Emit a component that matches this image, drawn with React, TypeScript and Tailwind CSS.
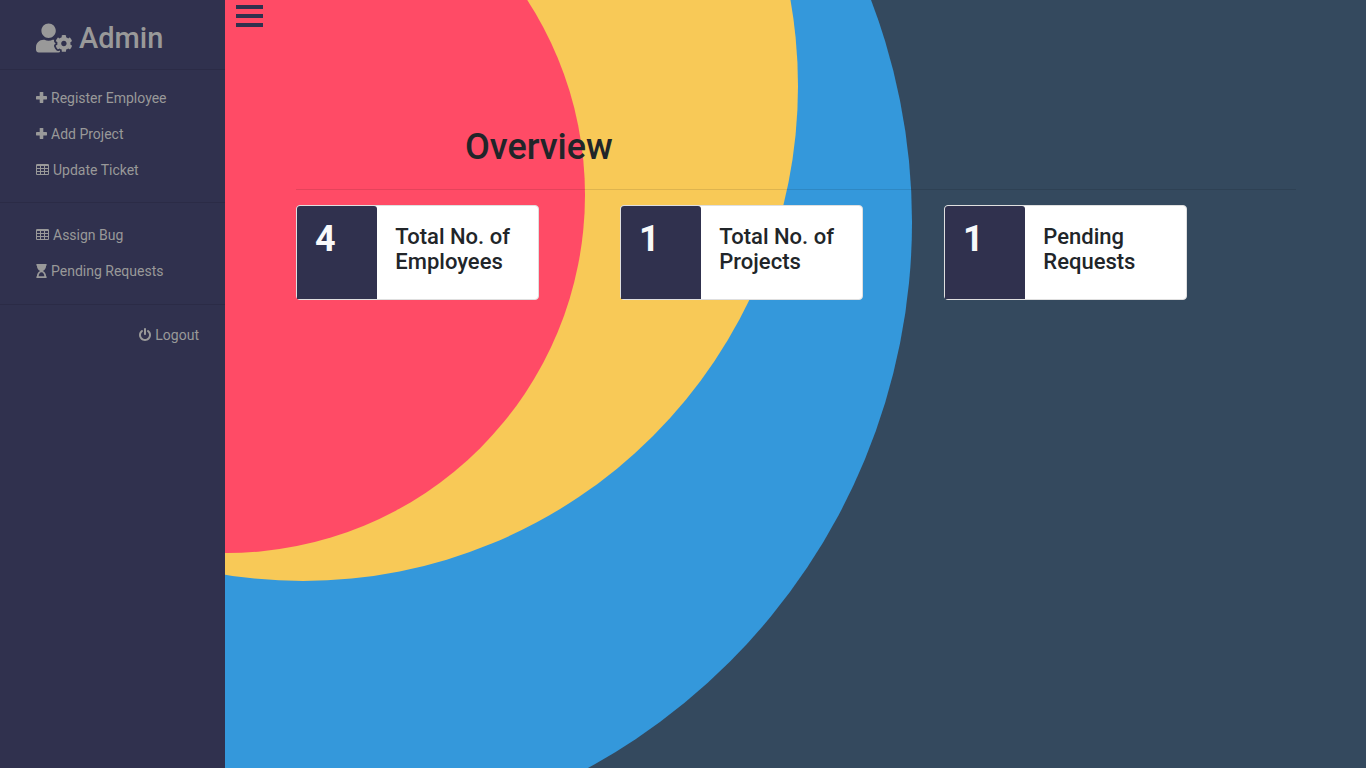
import { useState } from "react";
import type { ReactNode } from "react";
import { FaHourglassStart, FaUserCog } from "react-icons/fa";

function Glyph({ width, d }: { width: number; d: string }) {
  return (
    <svg
      aria-hidden="true"
      viewBox={`0 0 ${width} 1792`}
      className="h-[14px] w-auto shrink-0 fill-current"
    >
      <path d={d} />
    </svg>
  );
}

function PlusIcon() {
  return (
    <svg aria-hidden="true" viewBox="0 0 11 14" className="h-[14px] w-[11px] shrink-0 fill-current">
      <rect x="0" y="5" width="11" height="3.500" rx="0.400" />
      <rect x="3.700" y="1" width="3.600" height="11" rx="0.400" />
    </svg>
  );
}

const tablePath =
  "M512 1376v-192q0-14-9-23t-23-9H160q-14 0-23 9t-9 23v192q0 14 9 23t23 9h320q14 0 23-9t9-23zm0-384V800q0-14-9-23t-23-9H160q-14 0-23 9t-9 23v192q0 14 9 23t23 9h320q14 0 23-9t9-23zm512 384v-192q0-14-9-23t-23-9H672q-14 0-23 9t-9 23v192q0 14 9 23t23 9h320q14 0 23-9t9-23zM512 608V416q0-14-9-23t-23-9H160q-14 0-23 9t-9 23v192q0 14 9 23t23 9h320q14 0 23-9t9-23zm512 384V800q0-14-9-23t-23-9H672q-14 0-23 9t-9 23v192q0 14 9 23t23 9h320q14 0 23-9t9-23zm512 384v-192q0-14-9-23t-23-9h-320q-14 0-23 9t-9 23v192q0 14 9 23t23 9h320q14 0 23-9t9-23zm-512-768V416q0-14-9-23t-23-9H672q-14 0-23 9t-9 23v192q0 14 9 23t23 9h320q14 0 23-9t9-23zm512 384V800q0-14-9-23t-23-9h-320q-14 0-23 9t-9 23v192q0 14 9 23t23 9h320q14 0 23-9t9-23zm0-384V416q0-14-9-23t-23-9h-320q-14 0-23 9t-9 23v192q0 14 9 23t23 9h320q14 0 23-9t9-23zm128-320v1088q0 66-47 113t-113 47H160q-66 0-113-47T0 1376V288q0-66 47-113t113-47h1344q66 0 113 47t47 113z";
const powerPath =
  "M1536 896q0 156-61 298t-164 245-245 164-298 61-298-61-245-164-164-245T0 896q0-182 80.500-343T307 283q43-32 95.500-25t83.500 50q32 42 24.500 94.500T461 489q-98 74-151.500 181T256 896q0 104 40.500 198.500T406 1258t163.500 109.500T768 1408t198.500-40.500T1130 1258t109.500-163.500T1280 896q0-119-53.500-226T1075 489q-42-32-49.500-84.500T1050 310q31-43 84-50t95 25q146 109 226.500 270t80.500 341zM896 128v640q0 52-38 90t-90 38-90-38-38-90V128q0-52 38-90t90-38 90 38 38 90z";

function NavLink({ icon, children }: { icon: ReactNode; children: ReactNode }) {
  return (
    <a href="#" className="flex items-center gap-1 text-sm leading-5 hover:text-gray-100">
      {icon}
      {children}
    </a>
  );
}

function StatCard({ value, label }: { value: number; label: string }) {
  return (
    <article className="flex h-[95px] w-3/4 rounded border border-[#dfdfdf] bg-white">
      <div className="w-1/3 rounded-t-[3px] bg-[#30314e] px-[18px] pt-3 text-4xl leading-[43px] font-bold text-[#f8f9fa]">
        {value}
      </div>
      <h2 className="flex-1 px-[18px] pt-[18px] text-[22px] leading-[25px] font-medium text-[#212529]">
        {label}
      </h2>
    </article>
  );
}

function Backdrop() {
  return (
    <svg
      aria-hidden="true"
      viewBox="0 0 1366 768"
      preserveAspectRatio="xMinYMin slice"
      className="absolute inset-0 -z-10 h-full w-full"
    >
      <rect width="1366" height="768" fill="#34495e" />
      <circle cx="290" cy="222" r="622" fill="#3498db" />
      <circle cx="303" cy="86" r="495" fill="#f8c957" />
      <circle cx="227" cy="195" r="358" fill="#ff4b66" />
    </svg>
  );
}

export default function App() {
  const [open, setOpen] = useState(true);
  return (
    <div className="relative isolate flex min-h-screen overflow-hidden font-['Roboto',sans-serif]">
      <Backdrop />
      {open && (
        <nav className="w-[225px] shrink-0 bg-[#30314e] text-[#999999]">
          <header className="flex h-[70px] items-center gap-[7px] border-b border-[#2b2b46] pt-[6px] pl-9">
            <FaUserCog className="h-[30px] w-9" aria-hidden="true" />
            <span className="text-[29px] leading-9 font-medium">Admin</span>
          </header>
          <div className="flex flex-col gap-4 border-b border-[#2b2b46] pt-[18px] pb-[22px] pl-9">
            <NavLink icon={<PlusIcon />}>Register Employee</NavLink>
            <NavLink icon={<PlusIcon />}>Add Project</NavLink>
            <NavLink icon={<Glyph width={1664} d={tablePath} />}>Update Ticket</NavLink>
          </div>
          <div className="flex flex-col gap-4 border-b border-[#2b2b46] pt-[22px] pb-[23px] pl-9">
            <NavLink icon={<Glyph width={1664} d={tablePath} />}>Assign Bug</NavLink>
            <NavLink icon={<FaHourglassStart className="h-[14px] w-[11px]" aria-hidden="true" />}>
              Pending Requests
            </NavLink>
          </div>
          <div className="flex justify-end pt-5 pr-[26px]">
            <NavLink icon={<Glyph width={1536} d={powerPath} />}>Logout</NavLink>
          </div>
        </nav>
      )}
      <main className="min-w-0 flex-1">
        <button
          type="button"
          aria-label="Toggle menu"
          onClick={() => setOpen(!open)}
          className="mt-[5px] ml-[11px] flex w-[27px] flex-col gap-[5px]"
        >
          <span className="h-1 w-full bg-[#30314e]" />
          <span className="h-1 w-full bg-[#30314e]" />
          <span className="h-1 w-full bg-[#30314e]" />
        </button>
        <div className="mt-[99px] ml-[71px] mr-[70px]">
          <h1 className="pl-[169px] text-4xl leading-[43px] font-medium text-[#212529]">
            Overview
          </h1>
          <hr className="mt-5 border-black/10" />
          <section className="mt-[15px] mr-[28px] grid grid-cols-3">
            <StatCard value={4} label="Total No. of Employees" />
            <StatCard value={1} label="Total No. of Projects" />
            <StatCard value={1} label="Pending Requests" />
          </section>
        </div>
      </main>
    </div>
  );
}
